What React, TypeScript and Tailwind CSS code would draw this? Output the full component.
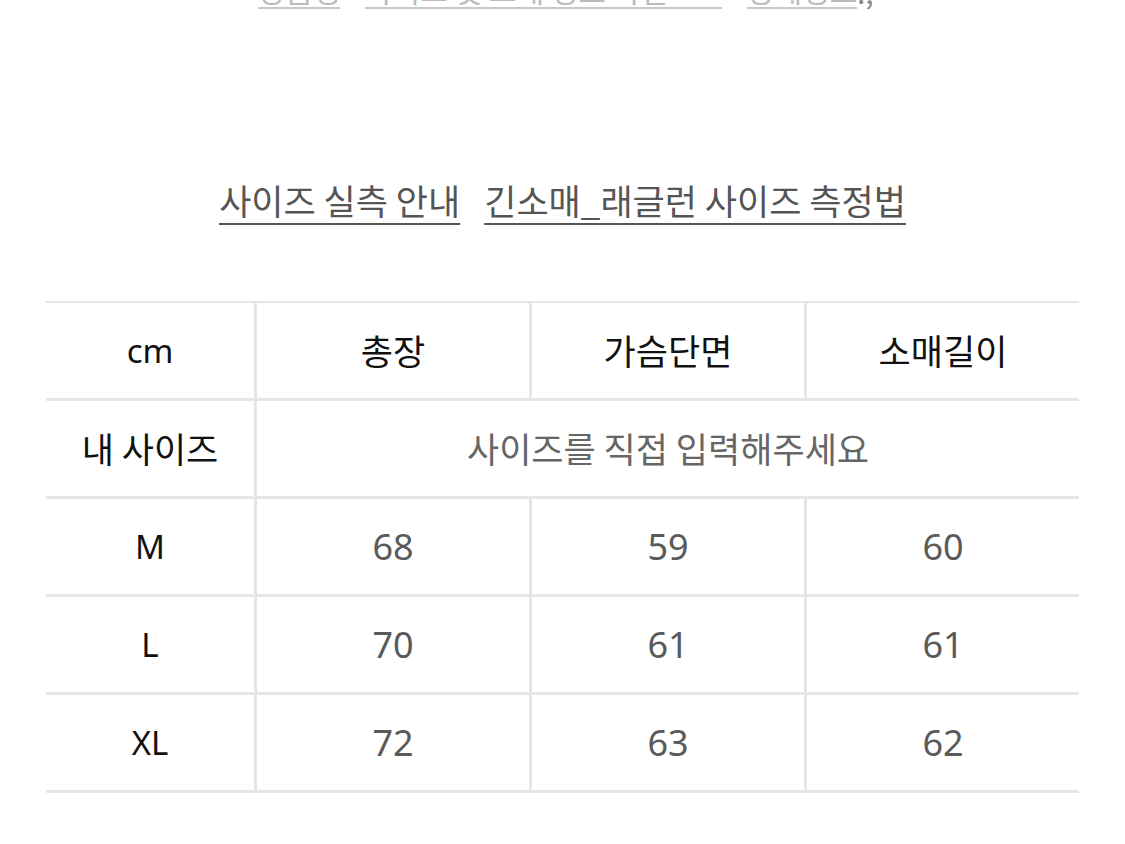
import React from "react";

const font = { fontFamily: '"Noto Sans", "Noto Sans CJK KR", sans-serif' };
const kr = { fontFamily: '"Noto Sans CJK KR", "Noto Sans", sans-serif' };

const rows = [
  { size: "M", v: ["68", "59", "60"] },
  { size: "L", v: ["70", "61", "61"] },
  { size: "XL", v: ["72", "63", "62"] },
];

const line = "border-[#e6e6e6]";

export default function App() {
  return (
    <div className="w-[1125px] h-[844px] bg-white overflow-hidden" style={font}>
      {/* clipped line at very top */}
      <div className="h-[9px] overflow-hidden flex items-end" style={kr}>
        <div className="flex items-end text-[30px] leading-[36px] text-[#bbbbbb]">
          <span className="ml-[258px] w-[82px] border-b-2 border-[#c8c8c8] overflow-hidden whitespace-nowrap">상품정보</span>
          <span className="ml-[25px] w-[357px] border-b-2 border-[#c8c8c8] overflow-hidden whitespace-nowrap">사이즈 및 소재 정보 확인</span>
          <span className="ml-[25px] w-[110px] border-b-2 border-[#c8c8c8] overflow-hidden whitespace-nowrap">상세정보</span>
          <span className="text-[#888]">.,</span>
        </div>
      </div>

      {/* links */}
      <div className="mt-[170px] flex justify-center gap-[24px] text-[35px] leading-[42px] text-[#555555]" style={kr}>
        <span className="underline decoration-2 underline-offset-[8px] decoration-[#555555]">사이즈 실측 안내</span>
        <span className="underline decoration-2 underline-offset-[8px] decoration-[#555555]">긴소매_래글런 사이즈 측정법</span>
      </div>

      {/* table */}
      <div className={`mt-[80px] mx-[46px] border-t-2 ${line}`}>
        <div className={`grid grid-cols-[211px_275px_275px_1fr] h-[98px] border-b-[3px] ${line} text-[#111111]`}>
          <div className={`flex items-center justify-center border-r-[3px] ${line} text-[33px]`}>cm</div>
          <div className={`flex items-center justify-center border-r-[3px] ${line} text-[35px]`} style={kr}>총장</div>
          <div className={`flex items-center justify-center border-r-[3px] ${line} text-[35px]`} style={kr}>가슴단면</div>
          <div className="flex items-center justify-center text-[35px]" style={kr}>소매길이</div>
        </div>
        <div className={`grid grid-cols-[211px_1fr] h-[98px] border-b-[3px] ${line}`} style={kr}>
          <div className={`flex items-center justify-center border-r-[3px] ${line} text-[#111111] text-[35px]`}>내 사이즈</div>
          <div className="flex items-center justify-center text-[#666666] text-[35px]">사이즈를 직접 입력해주세요</div>
        </div>
        {rows.map((r) => (
          <div
            key={r.size}
            className={`grid grid-cols-[211px_275px_275px_1fr] h-[98px] border-b-[3px] ${line}`}
          >
            <div className={`flex items-center justify-center border-r-[3px] ${line} text-[#111111] text-[33px]`}>{r.size}</div>
            <div className={`flex items-center justify-center border-r-[3px] ${line} text-[#5a5a5a] text-[36px]`}>{r.v[0]}</div>
            <div className={`flex items-center justify-center border-r-[3px] ${line} text-[#5a5a5a] text-[36px]`}>{r.v[1]}</div>
            <div className="flex items-center justify-center text-[#5a5a5a] text-[36px]">{r.v[2]}</div>
          </div>
        ))}
      </div>
    </div>
  );
}
